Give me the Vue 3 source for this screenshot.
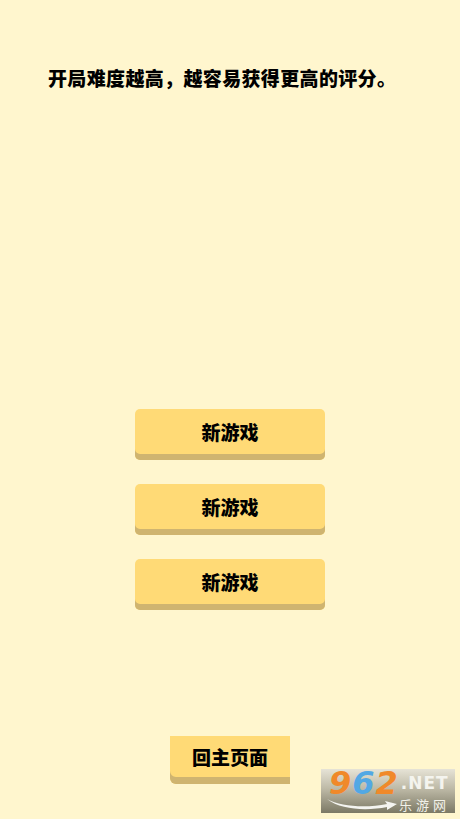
<script setup>
const rows = ['新游戏', '新游戏', '新游戏']
</script>

<template>
  <div class="page">
    <p class="title">开局难度越高，越容易获得更高的评分。</p>
    <div class="choices">
      <button v-for="(label, i) in rows" :key="i" class="btn">{{ label }}</button>
    </div>
    <button class="back">回主页面</button>
    <div class="mark">
      <div class="mark-top"><span class="n9">9</span><span class="n6">6</span><span class="n2">2</span><span class="net">.NET</span></div>
      <div class="mark-bottom">
        <svg class="swoosh" width="70" height="12" viewBox="0 0 70 12"><path d="M0 0C14 8 40 9 60 5L58 2L70 5L60 11L60 8C40 12 14 11 0 0Z" fill="#f4f4f0"/></svg>
        <span class="cn">乐游网</span>
      </div>
    </div>
  </div>
</template>

<style scoped>
.page {
  position: relative;
  box-sizing: border-box;
  width: 460px;
  height: 819px;
  overflow: hidden;
  background: #fff6ce;
  font-family: "Noto Sans CJK SC", sans-serif;
  color: #000;
  display: flex;
  flex-direction: column;
  align-items: center;
}
.title {
  align-self: flex-start;
  margin: 65px 0 0 48px;
  font-size: 19px;
  line-height: 26px;
  font-weight: 900;
  letter-spacing: 0.35px;
  white-space: nowrap;
}
.choices {
  margin-top: 318px;
  display: flex;
  flex-direction: column;
  gap: 24px;
}
.btn, .back {
  border: 0;
  padding: 0;
  background: #ffda76;
  color: #000;
  font-family: inherit;
  font-weight: 900;
  box-sizing: border-box;
}
.btn {
  width: 190px;
  height: 51px;
  padding-bottom: 6px;
  border-radius: 5px;
  font-size: 19px;
  box-shadow: inset 0 -6px 0 #cfb470;
}
.back {
  margin-top: 126px;
  width: 120px;
  height: 48px;
  padding-bottom: 7px;
  border-radius: 0 0 0 6px;
  font-size: 19px;
  box-shadow: inset 0 -7px 0 #cfb470;
}
.mark {
  position: absolute;
  left: 321px;
  top: 769px;
  width: 134px;
  height: 44px;
  box-sizing: border-box;
  padding-left: 8px;
  background: linear-gradient(#e6e3d6 0%, #bdb9a6 45%, #7c7965 100%);
}
.mark-top {
  height: 28px;
  display: flex;
  align-items: baseline;
  font-family: "DejaVu Sans", sans-serif;
  font-weight: 700;
  font-style: italic;
  font-size: 32px;
  line-height: 28px;
  letter-spacing: 1px;
}
.n9, .n2 { color: #f0892a; }
.n6 { color: #52a8e4; }
.net {
  margin-left: 2px;
  color: #f4f4ee;
  font-size: 17px;
  font-style: normal;
  font-weight: 700;
  letter-spacing: 1px;
  transform: translateY(-5px);
}
.mark-bottom {
  display: flex;
  align-items: center;
  height: 16px;
  margin-left: -2px;
}
.swoosh { flex: none; }
.cn {
  margin-left: 2px;
  color: #f2f2ea;
  font-size: 13px;
  line-height: 16px;
  letter-spacing: 4px;
  white-space: nowrap;
}
</style>
